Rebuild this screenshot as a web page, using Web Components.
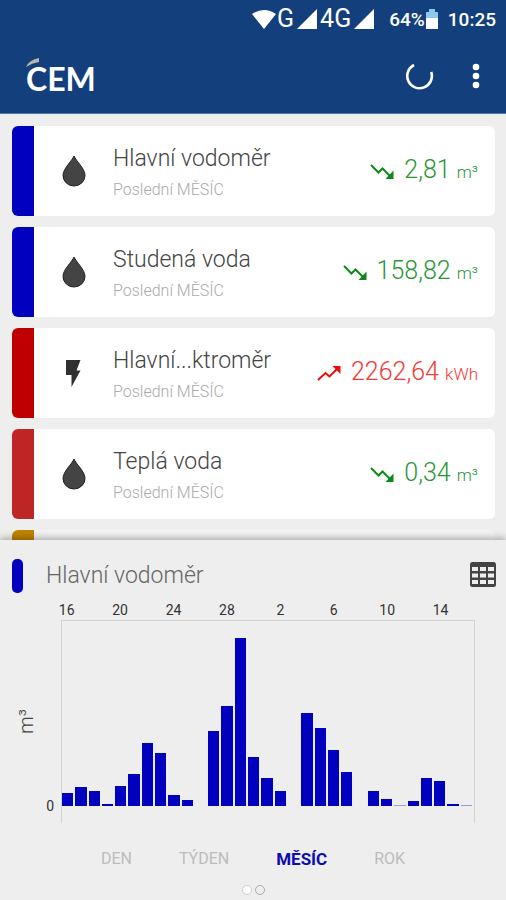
<!DOCTYPE html>
<html lang="cs">
<head>
<meta charset="utf-8">
<meta name="viewport" content="width=device-width, initial-scale=1">
<title>CEM</title>
<style>
html, body { margin: 0; height: 100%; }
body { font-family: Roboto, "Liberation Sans", sans-serif; background: #eeeeee; color: #444; }
</style>
</head>
<body>
<cem-app></cem-app>
<script>
const define = (name, html, setup) => {
  const tpl = document.createElement('template');
  tpl.innerHTML = html;
  customElements.define(name, class extends HTMLElement {
    constructor() {
      super();
      this.attachShadow({ mode: 'open' }).append(tpl.content.cloneNode(true));
    }
    connectedCallback() { if (setup) setup(this, this.shadowRoot); }
  });
};

define('status-bar', `
<style>
:host { display: flex; align-items: center; justify-content: flex-end; height: 38px; padding-right: 10px; color: #fff; font-size: 19px; font-weight: 500; }
svg { display: block; flex: none; }
.net { font-size: 25px; font-weight: 400; line-height: 24px; }
.pct { margin-left: 15px; }
.time { margin-left: 9px; }
.sig { margin: 0 3px; }
</style>
<svg width="26" height="20" viewBox="0 0 26 20" fill="#fff"><path d="M1 5Q13-3 25 5L13 20Z"/></svg>
<span class="net">G</span>
<svg class="sig" width="20" height="20" viewBox="0 0 20 20" fill="#fff"><path d="M0 20L20 0V20Z"/></svg>
<span class="net">4G</span>
<svg style="margin-left:3px" width="20" height="20" viewBox="0 0 20 20" fill="#fff"><path d="M0 20L20 0V20Z"/></svg>
<span class="pct">64%</span>
<svg width="14" height="20" viewBox="0 0 14 20"><path fill="#8fc9ee" d="M1 3h3V0h6v3h3v7H1z"/><path fill="#fff" d="M1 9h12v11H1z"/></svg>
<span class="time">10:25</span>
`);

define('app-bar', `
<style>
:host { display: flex; align-items: center; height: 75px; padding: 0 16px 0 26px; color: #fff; }
.logo { position: relative; font: 700 32px/38px Lato, sans-serif; margin-right: auto; padding-top: 6px; }
.logo svg { position: absolute; left: 0; top: 4px; }
button { display: flex; align-items: center; justify-content: center; height: 40px; border: 0; padding: 0; background: none; color: inherit; }
.sync { width: 32px; margin-right: 27px; }
.more { width: 28px; }
</style>
<div class="logo">CEM<svg width="16" height="12" viewBox="0 0 16 12"><path fill="#b9b4aa" d="M0 9Q3 2 13 0V4Q6 5 0 9Z"/></svg></div>
<button class="sync" aria-label="Obnovit"><svg width="30" height="30" viewBox="0 0 30 30" fill="none" stroke="#fff" stroke-width="2.6"><path d="M10 4A12.3 12.3 0 1 0 27.2 11"/></svg></button>
<button class="more" aria-label="Nabídka"><svg width="8" height="26" viewBox="0 0 8 26" fill="#fff"><circle cx="4" cy="4" r="3.3"/><circle cx="4" cy="13" r="3.3"/><circle cx="4" cy="22" r="3.3"/></svg></button>
`);

const kinds = {
  water: '<svg width="24" height="32" viewBox="0 0 24 32"><path fill="#444" stroke="#222" d="M12 1C10 6 1 13.500 1 20.500a11 10.500 0 0 0 22 0C23 13.500 14 6 12 1Z"/></svg>',
  power: '<svg width="24" height="28" viewBox="0 0 24 28"><path fill="#303030" d="M4 1H18.500L14.500 11.500H18.500L9.500 28V16H4Z"/></svg>'
};
const trends = {
  down: '<path d="M1 2L8.500 9.500L12.500 5.500L20 13"/><path fill="currentColor" stroke="none" d="M23.500 7.500V16H15.500Z"/>',
  up: '<path d="M1 15L8.500 8L12.500 11.500L20 4"/><path fill="currentColor" stroke="none" d="M15.500 1H23.500V9Z"/>'
};
define('meter-card', `
<style>
:host { display: flex; flex: none; height: 90px; border-radius: 6px; overflow: hidden; background: var(--surface, #fff); }
.stripe { width: 22px; background: var(--tone); }
.kind { width: 79px; display: flex; align-items: center; justify-content: center; }
.text { flex: 1; min-width: 0; padding-top: 19px; }
h2 { margin: 0; font-size: 23px; line-height: 28px; font-weight: 300; white-space: nowrap; color: #444; }
p { margin: 6px 0 0; font-size: 16px; line-height: 22px; font-weight: 300; color: #aaa; }
.value { display: flex; align-items: center; gap: 10px; padding-right: 17px; color: #2a9636; font-weight: 300; white-space: nowrap; }
:host([trend=up]) .value { color: #f23a36; }
.value svg { color: #0d8a1c; }
:host([trend=up]) svg { color: #f00a0a; }
.num { font-size: 25px; line-height: 32px; }
small { font-size: 17px; }
</style>
<div class="stripe"></div><div class="kind"></div>
<div class="text"><h2><slot></slot></h2><p></p></div>
<div class="value"></div>
`, (el, r) => {
  if (!el.hasAttribute('value')) return;
  r.querySelector('.kind').innerHTML = kinds[el.getAttribute('kind')];
  r.querySelector('p').textContent = 'Poslední MĚSÍC';
  r.querySelector('.value').innerHTML =
    `<svg width="24" height="17" viewBox="0 0 24 17" fill="none" stroke="currentColor" stroke-width="2">${trends[el.getAttribute('trend')]}</svg>` +
    `<span class="num">${el.getAttribute('value')} <small>${el.getAttribute('unit')}</small></span>`;
});

define('bar-chart', `
<style>
:host { display: grid; grid-template-columns: 61px 1fr; margin-right: 31px; }
.labels, .plot { display: grid; grid-template-columns: repeat(31, minmax(0, 1fr)); }
.labels { grid-column: 2; height: 20px; font-size: 14px; line-height: 20px; color: #333; }
.labels span { display: flex; justify-content: center; white-space: nowrap; padding-right: 2px; }
.axis { display: flex; flex-direction: column; align-items: flex-end; justify-content: space-between; color: #333; font-size: 14px; }
.unit { writing-mode: vertical-rl; transform: rotate(180deg); font-size: 20px; line-height: 24px; font-weight: 300; color: #444; margin: 89px 23px 0 0; }
.zero { line-height: 16px; margin: 0 7px 9px 0; }
.plot { height: 185px; padding: 0 0 17px; align-items: end; border: 1px solid #d2d2d2; border-bottom: 0; }
.plot i { background: #0000be; margin: 0 2px 0 0; }
.plot i.faint { background: #9c9cd2; }
</style>
<div class="labels"></div>
<div class="axis"><span class="unit">m³</span><span class="zero">0</span></div>
<div class="plot" role="img" aria-label="Denní spotřeba"></div>
`, (el, r) => {
  const bars = [13,19,15,2,20,32,63,53,11,6,0,75,100,168,49,28,15,0,93,78,56,34,0,15,7,1,5,28,25,2,1];
  r.querySelector('.plot').innerHTML = bars.map(h => `<i style="height:${h}px"${h === 1 ? ' class="faint"' : ''}></i>`).join('');
  r.querySelector('.labels').innerHTML = [16,20,24,28,2,6,10,14].map((t, i) => `<span style="grid-column:${i * 4 + 1}">${t}</span>`).join('');
});

define('chart-panel', `
<style>
:host { display: block; position: relative; background: #eee; box-shadow: 0 -2px 7px rgba(0,0,0,.3); }
header { display: flex; align-items: center; padding: 12px 10px 0 12px; height: 48px; }
.mark { width: 11px; height: 34px; border-radius: 5px; background: #0000be; margin-right: 23px; }
h2 { margin: 0 auto 0 0; font-size: 23px; line-height: 28px; font-weight: 300; color: #666; }
button { border: 0; padding: 0; background: none; font: inherit; display: block; }
nav { display: flex; justify-content: center; gap: 47px; padding: 25px 0 0; }
nav button { font-size: 16px; line-height: 22px; color: #bcbcbc; }
nav button[aria-pressed=true] { color: #0c0cb4; font-size: 17px; font-weight: 700; }
.pages { display: flex; justify-content: center; gap: 3px; padding: 15px 0 5px; }
.pages button { width: 10px; height: 10px; box-sizing: border-box; border: 1px solid #aaa; border-radius: 50%; }
.pages .on { background: #fff; border-color: #ccc; }
</style>
<header><span class="mark"></span><h2>Hlavní vodoměr</h2>
<button aria-label="Tabulka"><svg width="27" height="25" viewBox="0 0 27 25"><rect x="1" y="0" width="26" height="25" rx="2.500" fill="#444"/><g fill="#eee"><path d="M3 5h6v4H3zM11 5h6v4h-6zM19 5h6v4h-6zM3 11.500h6v4H3zM11 11.500h6v4h-6zM19 11.500h6v4h-6zM3 18h6v4H3zM11 18h6v4h-6zM19 18h6v4h-6z"/></g></svg></button></header>
<bar-chart></bar-chart>
<nav aria-label="Období"><button>DEN</button><button>TÝDEN</button><button aria-pressed="true">MĚSÍC</button><button>ROK</button></nav>
<div class="pages"><button class="on" aria-label="Strana 1"></button><button aria-label="Strana 2"></button></div>
`);

define('cem-app', `
<style>
:host { display: flex; flex-direction: column; height: 100vh; }
.top { background: #133f7d; border-bottom: 1px solid #5579a5; flex: none; }
main { flex: 1; min-height: 0; overflow-y: auto; scrollbar-width: none; display: flex; flex-direction: column; gap: 11px; padding: 11px 11px 0 12px; border-top: 1px solid #e4ebf3; }
chart-panel { flex: none; }
</style>
<div class="top"><status-bar></status-bar><app-bar></app-bar></div>
<main>
<meter-card style="--tone:#0000be" kind="water" trend="down" value="2,81" unit="m³">Hlavní vodoměr</meter-card>
<meter-card style="--tone:#0000be" kind="water" trend="down" value="158,82" unit="m³">Studená voda</meter-card>
<meter-card style="--tone:#be0000" kind="power" trend="up" value="2262,64" unit="kWh">Hlavní...ktroměr</meter-card>
<meter-card style="--tone:#be2626" kind="water" trend="down" value="0,34" unit="m³">Teplá voda</meter-card>
<meter-card style="--tone:#be8400;--surface:#f3f3f3"></meter-card>
</main>
<chart-panel></chart-panel>
`);
</script>
</body>
</html>
